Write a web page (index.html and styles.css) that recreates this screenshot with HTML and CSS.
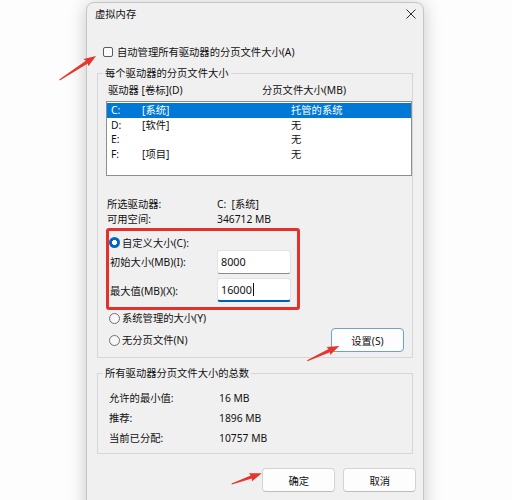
FILE: index.html
```html
<!DOCTYPE html>
<html lang="zh-CN">
<head>
<meta charset="utf-8">
<title>虚拟内存</title>
<link rel="stylesheet" href="styles.css">
</head>
<body>
<div class="stage">
  <div class="dialog">
    <div class="titlebar">
      <span class="title">虚拟内存</span>
      <svg class="close" width="10" height="10" viewBox="0 0 10 10"><path d="M0.5 0.5 L9.5 9.5 M9.5 0.5 L0.5 9.5" stroke="#2b2b2b" stroke-width="1" fill="none"/></svg>
    </div>
    <div class="body">
      <div class="check-row"><span class="checkbox"></span><span>自动管理所有驱动器的分页文件大小(A)</span></div>

      <fieldset class="group group-drives">
        <legend>每个驱动器的分页文件大小</legend>
        <div class="list-head"><span class="c-drive">驱动器 [卷标](D)</span><span>分页文件大小(MB)</span></div>
        <div class="listbox">
          <div class="row selected"><span class="col-d">C:</span><span class="col-l">[系统]</span><span>托管的系统</span></div>
          <div class="row"><span class="col-d">D:</span><span class="col-l">[软件]</span><span>无</span></div>
          <div class="row"><span class="col-d">E:</span><span class="col-l"></span><span>无</span></div>
          <div class="row"><span class="col-d">F:</span><span class="col-l">[项目]</span><span>无</span></div>
        </div>
        <div class="info">
          <span>所选驱动器:</span><span>C:&nbsp; [系统]</span>
          <span>可用空间:</span><span>346712 MB</span>
        </div>
        <div class="highlight">
          <div class="radio-row tight"><span class="radio on"></span><span>自定义大小(C):</span></div>
          <div class="field-row"><span class="flabel">初始大小(MB)(I):</span><div class="input">8000</div></div>
          <div class="field-row"><span class="flabel">最大值(MB)(X):</span><div class="input focus">16000<span class="caret"></span></div></div>
        </div>
        <div class="options-row">
          <div class="radios">
            <div class="radio-row"><span class="radio"></span><span>系统管理的大小(Y)</span></div>
            <div class="radio-row second"><span class="radio"></span><span>无分页文件(N)</span></div>
          </div>
          <button class="btn btn-default btn-set">设置(S)</button>
        </div>
      </fieldset>

      <fieldset class="group group-total">
        <legend>所有驱动器分页文件大小的总数</legend>
        <div class="totals">
          <span>允许的最小值:</span><span>16 MB</span>
          <span>推荐:</span><span>1896 MB</span>
          <span>当前已分配:</span><span>10757 MB</span>
        </div>
      </fieldset>

      <div class="actions">
        <button class="btn">确定</button>
        <button class="btn">取消</button>
      </div>
    </div>
  </div>

  <svg class="arrows" width="512" height="500" viewBox="0 0 512 500">
    <g fill="#e5352c">
      <polygon transform="translate(59.5 80) rotate(-33.3)" points="0,-0.5 32.7,-1.7 31.7,-4.4 43.7,0 31.7,4.4 32.7,1.7 0,0.5"/>
      <polygon transform="translate(307.3 360.7) rotate(-24.7)" points="0,-0.5 24.2,-1.7 23.2,-4.4 35.2,0 23.2,4.4 24.2,1.7 0,0.5"/>
      <polygon transform="translate(231.7 484) rotate(-19.6)" points="0,-0.5 20.85,-1.7 19.85,-4.4 31.85,0 19.85,4.4 20.85,1.7 0,0.5"/>
    </g>
  </svg>
</div>
</body>
</html>
```
FILE: styles.css
```css
html, body {
  margin: 0;
  padding: 0;
}
body {
  background: #fdfdfd;
  font-family: "Noto Sans", "Noto Sans CJK SC", sans-serif;
  font-size: 10.3px;
  color: #111;
}
.stage {
  position: relative;
  width: 512px;
  height: 500px;
  overflow: hidden;
  padding: 2px 0 0 86px;
  box-sizing: border-box;
}
.dialog {
  width: 338px;
  height: 520px;
  background: #f0f0f0;
  border: 1px solid #c6c6c6;
  border-radius: 8px 8px 0 0;
  box-shadow: 0 2px 18px rgba(0, 0, 0, 0.22);
  box-sizing: border-box;
}
.titlebar {
  height: 22px;
  display: flex;
  align-items: center;
  justify-content: space-between;
  padding: 0 7.5px 0 8px;
}
.title {
  line-height: 16px;
}
.close {
  display: block;
}
.body {
  padding: 0 10px;
}
.check-row {
  display: flex;
  align-items: center;
  margin-top: 19px;
  padding-left: 6px;
  line-height: 16px;
  height: 16px;
}
.checkbox {
  width: 10px;
  height: 10px;
  border: 1px solid #5a5a5a;
  border-radius: 2px;
  background: #fbfbfb;
  box-sizing: border-box;
  margin-right: 4px;
}
.group {
  margin: 5px 0 0;
  border: 1px solid #d6d6d6;
  padding: 1px 0 5px 8px;
  min-width: 0;
}
.group legend {
  padding: 0 2px;
  margin-left: -3px;
  line-height: 16px;
}
.list-head {
  display: flex;
  line-height: 16px;
}
.c-drive {
  width: 156px;
  padding-left: 2px;
  box-sizing: border-box;
}
.listbox {
  margin-top: 3px;
  height: 75px;
  background: #fff;
  border: 1px solid #8e8e8e;
  padding-top: 1px;
  box-sizing: border-box;
}
.row {
  display: flex;
  height: 14.5px;
  line-height: 14.5px;
}
.row.selected {
  background: #0078d7;
  color: #fff;
}
.col-d {
  width: 35px;
  padding-left: 4px;
  box-sizing: border-box;
}
.col-l {
  width: 149px;
}
.info {
  display: grid;
  grid-template-columns: 110px auto;
  margin-top: 20.5px;
  padding-left: 1px;
  line-height: 15px;
}
.highlight {
  margin-top: 1px;
  width: 194px;
  border: 3px solid #e4312b;
  border-radius: 3px;
  padding: 5px 0;
  box-sizing: border-box;
}
.radio-row {
  display: flex;
  align-items: center;
  height: 16px;
  line-height: 16px;
}
.radio-row.tight {
  height: 14px;
}
.radio-row.second {
  margin-top: 6px;
}
.radio {
  width: 11px;
  height: 11px;
  border: 1px solid #6f6f6f;
  border-radius: 50%;
  background: #f7f7f7;
  box-sizing: border-box;
  margin-right: 2px;
  flex: none;
}
.radio.on {
  border: none;
  background: radial-gradient(circle, #ffffff 0 2.3px, #0067c0 2.8px);
}
.field-row {
  display: flex;
  align-items: center;
  height: 24px;
}
.field-row + .field-row {
  margin-top: 4.5px;
}
.flabel {
  width: 108px;
  padding-left: 1px;
  box-sizing: border-box;
}
.input {
  width: 74px;
  height: 24px;
  box-sizing: border-box;
  background: #fff;
  border: 1px solid #e3e3e3;
  border-bottom-color: #8a8a8a;
  border-radius: 3px;
  padding-left: 3px;
  display: flex;
  align-items: center;
  font-size: 10.8px;
}
.input.focus {
  border-bottom: 2px solid #005fb8;
}
.caret {
  display: inline-block;
  width: 1px;
  height: 13px;
  background: #111;
  margin-left: 1px;
}
.options-row {
  display: flex;
  justify-content: space-between;
  align-items: flex-start;
}
.radios {
  padding-left: 3px;
}
.btn {
  font: inherit;
  color: #111;
  width: 72.6px;
  height: 24px;
  padding: 0;
  background: #fdfdfd;
  border: 1px solid #d4d4d4;
  border-bottom-color: #bdbdbd;
  border-radius: 4px;
  box-sizing: border-box;
}
.btn-default {
  border: 1px solid #6e9ed4;
}
.btn-set {
  width: 73px;
  margin-top: 18px;
  margin-right: 8px;
}
.group-total {
  margin-top: 7px;
  padding-top: 7px;
}
.totals {
  display: grid;
  grid-template-columns: 110px auto;
  padding-left: 3px;
  line-height: 20px;
}
.actions {
  display: flex;
  justify-content: flex-end;
  gap: 8.4px;
  margin-top: 14px;
  margin-right: -3px;
}
.arrows {
  position: absolute;
  left: 0;
  top: 0;
  pointer-events: none;
}
```
